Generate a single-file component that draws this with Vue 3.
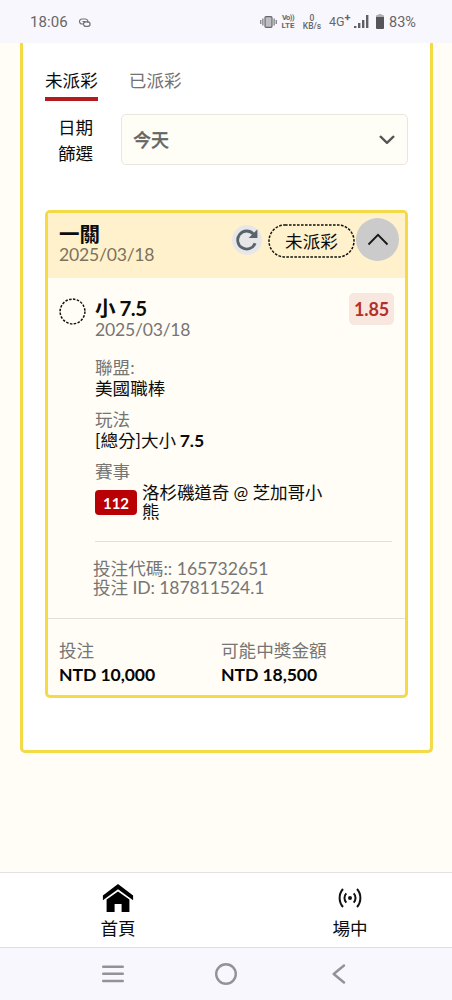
<script setup>
import { ref } from 'vue'

const tabs = ['未派彩', '已派彩']
const active = ref(0)
const details = [
  { label: '聯盟:', value: '美國職棒', bold: '' },
  { label: '玩法', value: '[總分]大小', bold: '7.5' },
]
const totals = [
  { label: '投注', value: 'NTD 10,000' },
  { label: '可能中獎金額', value: 'NTD 18,500' },
]
</script>

<template>
  <div class="screen">
    <header class="status">
      <span class="time">18:06</span>
      <svg class="link" width="12" height="10" viewBox="0 0 12 10" fill="none" stroke="#707074" stroke-width="1.2">
        <path d="M4.2 6H3A2.4 2.4 0 0 1 3 1h3.5a2.4 2.4 0 0 1 2 3.6" />
        <rect x="4.5" y="3.8" width="6.6" height="4.6" rx="2.3" />
        <path d="M3.5 3.6h3" />
      </svg>
      <span class="spacer"></span>
      <svg class="vibrate" width="17" height="12" viewBox="0 0 17 12" stroke="#68686c" fill="none">
        <rect x="5" y="0.7" width="7" height="10.6" rx="1" fill="#bdbdc2" stroke-width="1.2" />
        <path d="M0.8 4v4M2.9 2.5v7M14.1 2.5v7M16.2 4v4" stroke-width="1.1" />
      </svg>
      <span class="stack volte"><b class="vo">Vo))</b><b>LTE</b></span>
      <span class="stack speed"><b>0</b><b>KB/s</b></span>
      <span class="network">4G<sup>+</sup></span>
      <svg class="signal" width="15" height="14" viewBox="0 0 15 14" fill="#606064">
        <path d="M0 11h2.4v2H0zM4 8h2.4v5H4zM8 5h2.4v8H8zM12 0h2.4v13H12z" />
      </svg>
      <svg class="battery" width="8" height="15" viewBox="0 0 8 15">
        <path d="M2.3 0h3.4v1H7a1 1 0 0 1 1 1v2H0V2a1 1 0 0 1 1-1h1.3z" fill="#b0b0b4" />
        <path d="M0 3h8v11a1 1 0 0 1-1 1H1a1 1 0 0 1-1-1z" fill="#55555a" />
      </svg>
      <span class="percent">83%</span>
    </header>

    <main class="content">
      <section class="panel">
        <nav class="tabs">
          <button v-for="(tab, i) in tabs" :key="tab" class="tab" :class="{ active: active === i }" @click="active = i">{{ tab }}</button>
        </nav>

        <div class="filter">
          <span class="filter-label">日期篩選</span>
          <div class="select">
            <span>今天</span>
            <svg width="16" height="10" viewBox="0 0 16 10" fill="none" stroke="#555" stroke-width="2.3" stroke-linecap="round" stroke-linejoin="round"><path d="M1.6 1.7 8 7.9l6.4-6.2" /></svg>
          </div>
        </div>

        <article class="card">
          <div class="card-head">
            <div class="heading">
              <h2>一關</h2>
              <p class="date">2025/03/18</p>
            </div>
            <span class="refresh">
              <svg width="22" height="22" viewBox="0 0 22 22" fill="none">
                <path d="M19.1 14.2A9 9 0 1 1 17.4 5" stroke="#59636a" stroke-width="2.8" />
                <path d="M21.4 .3V9h-8.7z" fill="#59636a" />
              </svg>
            </span>
            <span class="pill">
              <svg width="87" height="34" viewBox="0 0 87 34" fill="none"><rect x="1" y="1" width="85" height="32" rx="16" stroke="#111" stroke-width="1.5" stroke-dasharray="2.6 1.4" /></svg>
              <span>未派彩</span>
            </span>
            <span class="toggle">
              <svg width="22" height="13" viewBox="0 0 22 13" fill="none" stroke="#171717" stroke-width="1.8"><path d="m1.5 11.5 9.5-9.7 9.5 9.7" /></svg>
            </span>
          </div>

          <div class="bet">
            <svg class="ring" width="27" height="27" viewBox="0 0 27 27" fill="none"><circle cx="13.5" cy="13.5" r="12.4" stroke="#111" stroke-width="1.5" stroke-dasharray="2.5 1.4" /></svg>
            <div class="bet-body">
              <div class="pick">
                <div>
                  <h3>小 7.5</h3>
                  <p class="date">2025/03/18</p>
                </div>
                <span class="odds">1.85</span>
              </div>
              <dl class="details">
                <div v-for="row in details" :key="row.label" class="detail">
                  <dt>{{ row.label }}</dt>
                  <dd>{{ row.value }} <b v-if="row.bold">{{ row.bold }}</b></dd>
                </div>
                <div class="detail">
                  <dt>賽事</dt>
                  <dd class="match"><span class="number">112</span><span class="teams">洛杉磯道奇 @ 芝加哥小熊</span></dd>
                </div>
              </dl>
              <div class="codes">
                <p>投注代碼:: 165732651</p>
                <p class="bet-id">投注 ID: 187811524.1</p>
              </div>
            </div>
          </div>

          <div class="totals">
            <div v-for="t in totals" :key="t.label">
              <p>{{ t.label }}</p>
              <strong>{{ t.value }}</strong>
            </div>
          </div>
        </article>
      </section>
    </main>

    <nav class="bottom">
      <a class="item home">
        <svg width="32" height="28" viewBox="0 0 32 28" fill="#000">
          <path d="M16 0 .9 11.4v4.8L16 5.2l15.1 11v-4.8z" />
          <path d="M16 7.4 4.6 15.6V28h8v-8h7v8h7.8V15.6z" />
        </svg>
        <span>首頁</span>
      </a>
      <a class="item live">
        <svg width="24" height="20" viewBox="0 0 24 20" fill="none" stroke="#111" stroke-width="2">
          <circle cx="12" cy="10" r="2" fill="#111" stroke="none" />
          <path d="M8.3 5.4a6.7 6.7 0 0 0 0 9.2M15.7 5.4a6.7 6.7 0 0 1 0 9.2M5 1c-4.5 5-4.5 13 0 18M19 1c4.5 5 4.5 13 0 18" />
        </svg>
        <span>場中</span>
      </a>
    </nav>

    <footer class="system">
      <svg width="24" height="20" viewBox="0 0 24 20" stroke="#929298" stroke-width="2.6" stroke-linecap="round"><path d="M2.3 2.7h19.4M2.3 9.8h19.4M2.3 17h19.4" /></svg>
      <svg width="24" height="24" viewBox="0 0 24 24" fill="none" stroke="#929298" stroke-width="2.4"><circle cx="12" cy="12" r="9.8" /></svg>
      <svg width="14" height="20" viewBox="0 0 14 20" fill="none" stroke="#929298" stroke-width="2.4" stroke-linecap="round" stroke-linejoin="round"><path d="M12 1.5 1.7 10 12 18.5" /></svg>
    </footer>
  </div>
</template>

<style>
body {
  margin: 0;
}
</style>

<style scoped>
* {
  box-sizing: border-box;
  margin: 0;
}
.screen {
  width: 452px;
  height: 1000px;
  display: flex;
  flex-direction: column;
  overflow: hidden;
  background: #fffdf5;
  color: #0c0c0c;
  font: 17.6px/21px Lato, "Noto Sans CJK TC", sans-serif;
}
svg {
  display: block;
  flex: none;
}
.status {
  height: 43px;
  flex: none;
  display: flex;
  align-items: center;
  padding: 2px 35px 0 30px;
  background: #f8f7fd;
  color: #66666a;
  font-family: Roboto, sans-serif;
}
.time {
  font-size: 15px;
  letter-spacing: 0.1px;
}
.link {
  margin-left: 11px;
}
.spacer {
  flex: 1;
}
.vibrate {
  margin-top: -1px;
}
.stack {
  display: flex;
  flex-direction: column;
  align-items: center;
}
.stack b {
  font-size: 8px;
  line-height: 8px;
  font-weight: 700;
}
.stack .vo {
  font-size: 7.5px;
  letter-spacing: -0.5px;
}
.volte {
  width: 14px;
  margin: -2px 0 0 4px;
}
.speed {
  width: 20px;
  margin: -2px 0 0 7px;
}
.speed b {
  font-size: 8.5px;
  line-height: 8px;
  font-weight: 500;
}
.network {
  margin: -2px 0 0 7px;
  width: 21px;
  font-size: 12.5px;
  white-space: nowrap;
}
.network sup {
  font-size: 11px;
  line-height: 0;
  font-weight: 700;
}
.signal {
  margin: -1px 0 0 4px;
}
.battery {
  margin: -2px 5px 0 7px;
}
.percent {
  font-size: 14.5px;
  width: 28px;
}
.content {
  flex: 1;
  padding: 0 19px 0 20px;
}
.panel {
  height: 710px;
  padding: 26px 22px 0;
  border: 3px solid #f4da46;
  border-top: 0;
  border-radius: 0 0 5px 5px;
  background: #fff;
}
.tabs {
  display: flex;
  gap: 31px;
}
.tab {
  padding: 0 0 4px;
  border: 0;
  border-bottom: 4px solid transparent;
  background: none;
  font: inherit;
  line-height: 24px;
  color: #727272;
}
.tab.active {
  color: #0c0c0c;
  border-color: #b31b1e;
}
.filter {
  display: flex;
  margin-top: 13px;
  padding-left: 13px;
}
.filter-label {
  width: 36px;
  padding-top: 1px;
  line-height: 26px;
}
.select {
  flex: 1;
  height: 51px;
  margin: 0 0 2px 27px;
  padding: 0 12px 0 11px;
  display: flex;
  align-items: center;
  justify-content: space-between;
  border: 1.5px solid #ece4de;
  border-radius: 5px;
  background: #fffef6;
  color: #666;
  font-size: 18px;
  font-weight: 500;
  -webkit-text-stroke: 0.3px #666;
}
.select span {
  padding-top: 1px;
}
.card {
  height: 488px;
  margin-top: 43px;
  display: flex;
  flex-direction: column;
  border: 3px solid #f4da46;
  border-radius: 5px;
  background: #fffdf5;
}
.card-head {
  height: 65px;
  flex: none;
  display: flex;
  align-items: flex-start;
  padding: 5px 6px 0 11px;
  background: #fff1cb;
}
.heading {
  flex: 1;
  padding-top: 6px;
}
h2 {
  font-size: 20.5px;
  line-height: 20px;
}
.date {
  letter-spacing: -0.22px;
}
.heading p {
  color: #7c725c;
}
.refresh {
  width: 30px;
  height: 30px;
  margin: 7px 6px 0 0;
  display: grid;
  place-items: center;
  border-radius: 50%;
  background: #e7e7e9;
}
.pill {
  margin-top: 6px;
  display: grid;
  place-items: center;
}
.pill > * {
  grid-area: 1 / 1;
}
.toggle {
  width: 43px;
  height: 43px;
  margin-left: 1px;
  display: grid;
  place-items: center;
  border-radius: 50%;
  background: #cbcbcc;
}
.bet {
  flex: 1;
  display: flex;
  padding: 15px 12px 0 11px;
}
.ring {
  margin-top: 5px;
}
.bet-body {
  flex: 1;
  margin-left: 9px;
}
.pick {
  display: flex;
  justify-content: space-between;
  padding-top: 5px;
}
h3 {
  font-size: 20.5px;
  line-height: 21px;
  letter-spacing: -0.5px;
}
.pick p,
dt,
.codes,
.totals p {
  color: #757575;
}
.odds {
  width: 45px;
  height: 32px;
  margin-right: -1px;
  margin-top: -5px;
  border-radius: 5px;
  background: #f7e7df;
  color: #b4302a;
  font-size: 18px;
  font-weight: 700;
  letter-spacing: -0.2px;
  line-height: 33px;
  text-align: center;
}
.details {
  display: grid;
  gap: 10px;
  margin-top: 17px;
}
.detail dd b {
  margin-left: -1px;
  font-weight: 700;
}
.detail dd.match {
  display: flex;
  align-items: center;
  line-height: 19px;
  margin-top: 1px;
}
.number {
  width: 42px;
  height: 25px;
  flex: none;
  border-radius: 4px;
  background: #b90004;
  color: #fff;
  font-size: 15px;
  font-weight: 700;
  line-height: 26px;
  text-align: center;
}
.teams {
  width: 186px;
  margin-left: 5px;
  letter-spacing: -0.15px;
}
.codes {
  margin: 20px 1px 0 0;
  padding-top: 17px;
  border-top: 1px solid #e3dfd9;
  line-height: 19px;
}
.codes p {
  margin-left: -2px;
}
.bet-id {
  letter-spacing: -0.1px;
}
.totals {
  height: 77px;
  flex: none;
  display: grid;
  grid-template-columns: 162px 1fr;
  padding: 21px 11px 0;
  border-top: 1px solid #e3e0d9;
}
.totals strong {
  display: block;
  margin-top: 3px;
  color: #050505;
  letter-spacing: -0.08px;
}
.bottom {
  height: 76px;
  flex: none;
  display: flex;
  justify-content: space-between;
  padding: 0 67px 0 83px;
  border-top: 1px solid #e1e1e1;
  border-bottom: 1px solid #dedee2;
  background: #fff;
}
.item {
  width: 70px;
  display: flex;
  flex-direction: column;
  align-items: center;
  padding-top: 11px;
}
.item span {
  margin-top: 6px;
}
.live svg {
  margin: 4px 0;
}
.system {
  height: 52px;
  flex: none;
  display: grid;
  grid-template-columns: 113px 113px 120px;
  align-items: center;
  padding-left: 101px;
  background: #f8f7fd;
}
.system svg:nth-child(3) {
  margin-left: 5px;
}
</style>
